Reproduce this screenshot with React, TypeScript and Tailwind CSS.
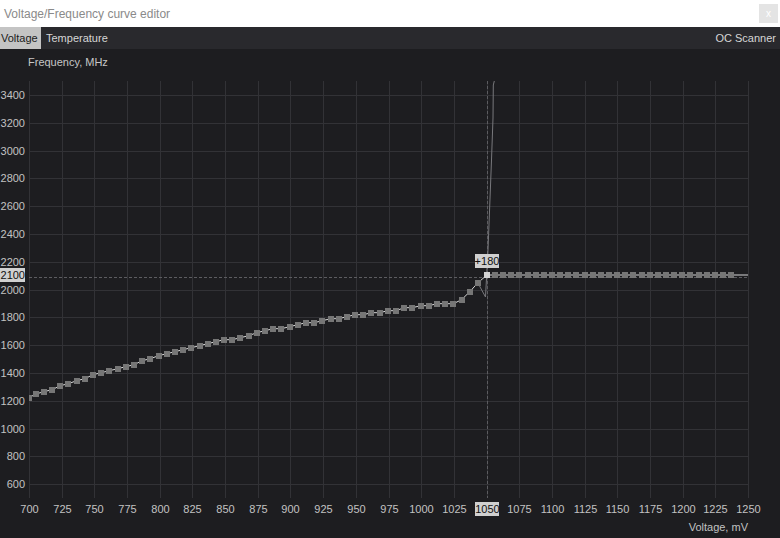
import React from "react";

// Plot geometry, in page pixels (the svg viewBox starts at the top of the chart panel)
const PLOT_LEFT = 29;
const PLOT_RIGHT = 748;
const PLOT_TOP = 81;
const PLOT_BOTTOM = 498;
const MV_MIN = 700;
const MV_MAX = 1250;
const MHZ_MIN = 500;
const MHZ_MAX = 3500;

const xOf = (mv: number) => PLOT_LEFT + ((mv - MV_MIN) / (MV_MAX - MV_MIN)) * (PLOT_RIGHT - PLOT_LEFT);
const yOf = (mhz: number) => PLOT_TOP + ((MHZ_MAX - mhz) / (MHZ_MAX - MHZ_MIN)) * (PLOT_BOTTOM - PLOT_TOP);

const VOLT_TICKS = Array.from({ length: 23 }, (_, i) => 700 + i * 25);
const FREQ_TICKS = Array.from({ length: 15 }, (_, i) => 600 + i * 200);

// curve points below the locked voltage (screen y, one every ~6.25 mV)
const RAMP_Y = [
  394, 391.7, 389.7, 385.7, 383.7, 380.7, 378.7, 374.7, 372.7, 370.7, 368.7, 366.7, 364.7, 360.7,
  358.7, 355.7, 353.7, 351.7, 349.7, 347.7, 345.7, 343.7, 341.7, 339.7, 339.7, 337.7, 335.7, 332.7,
  330.7, 328.7, 328.7, 326.7, 324.7, 322.7, 322.7, 320.7, 318.7, 318.7, 316.7, 314.7, 314.7, 312.7,
  312.7, 310.7, 310.7, 307.7, 307.7, 305.7, 305.7, 303.7, 303.7, 303.7, 299.7, 291.7, 282.7,
];

const LOCK_X = 487;
const LOCK_Y = 275;
const ramp = RAMP_Y.map((y, k) => ({ x: 35.7 + k * 8.19, y }));
const flat = Array.from({ length: 30 }, (_, k) => ({ x: 495 + k * 8.14, y: LOCK_Y }));
const firstPoint = { x: 29, y: 397.7 };

const linePoints = [firstPoint, ...ramp, { x: LOCK_X, y: LOCK_Y }, ...flat, { x: PLOT_RIGHT, y: LOCK_Y }]
  .map((p) => `${p.x},${p.y}`)
  .join(" ");

function CurveChart() {
  return (
    <svg
      width={780}
      height={489}
      viewBox="0 49 780 489"
      className="block font-['Liberation_Sans',Arial,sans-serif] text-[11px]"
    >
      <defs>
        <clipPath id="plot-clip">
          <rect x={PLOT_LEFT} y={PLOT_TOP} width={PLOT_RIGHT - PLOT_LEFT} height={PLOT_BOTTOM - PLOT_TOP} />
        </clipPath>
      </defs>

      <text x={28} y={66} fill="#c6c6c6">
        Frequency, MHz
      </text>

      {/* grid */}
      <g stroke="#323236" strokeWidth={1} shapeRendering="crispEdges">
        {VOLT_TICKS.map((mv) => {
          const x = Math.round(xOf(mv)) + 0.5;
          return <line key={mv} x1={x} x2={x} y1={PLOT_TOP} y2={PLOT_BOTTOM} />;
        })}
        {FREQ_TICKS.map((f) => {
          const y = Math.round(yOf(f)) + 0.5;
          return <line key={f} x1={PLOT_LEFT} x2={PLOT_RIGHT} y1={y} y2={y} />;
        })}
      </g>

      {/* locked point guides */}
      <g stroke="#5c5c60" strokeWidth={1} strokeDasharray="3 2" shapeRendering="crispEdges">
        <line x1={PLOT_LEFT} x2={PLOT_RIGHT} y1={277.5} y2={277.5} />
        <line x1={LOCK_X + 0.5} x2={LOCK_X + 0.5} y1={PLOT_TOP} y2={PLOT_BOTTOM} />
      </g>

      {/* default curve, shooting up past the lock */}
      <polyline
        points="479,285 485.5,297 488,250 491.5,160 493,118 493.3,85 494.3,81"
        fill="none"
        stroke="#78787c"
        strokeWidth={1}
        clipPath="url(#plot-clip)"
      />

      {/* edited curve */}
      <g clipPath="url(#plot-clip)">
        <polyline points={linePoints} fill="none" stroke="#d6d6d6" strokeWidth={1} />
        <g fill="#767676" shapeRendering="crispEdges">
          {[firstPoint, ...ramp, ...flat].map((p, i) => (
            <rect key={i} x={Math.round(p.x) - 3} y={Math.round(p.y) - 3} width={6} height={6} />
          ))}
        </g>
        <rect x={LOCK_X - 3} y={LOCK_Y - 3} width={6} height={6} fill="#d4d4d4" shapeRendering="crispEdges" />
      </g>

      {/* offset tag */}
      <rect x={475} y={254} width={24} height={14} fill="#d0d0d0" />
      <text x={487} y={265} textAnchor="middle" fill="#111">
        +180
      </text>

      {/* frequency axis */}
      <g fill="#c2c2c2">
        {FREQ_TICKS.map((f) => (
          <text key={f} x={25} y={Math.round(yOf(f)) + 4} textAnchor="end">
            {f}
          </text>
        ))}
      </g>
      <rect x={0} y={268} width={25} height={14} fill="#d0d0d0" />
      <text x={25} y={279} textAnchor="end" fill="#111">
        2100
      </text>

      {/* voltage axis */}
      <rect x={475} y={502} width={24} height={14} fill="#d0d0d0" />
      {VOLT_TICKS.map((mv) => (
        <text
          key={mv}
          x={Math.round(xOf(mv)) + 0.5}
          y={513}
          textAnchor="middle"
          fill={mv === 1050 ? "#111" : "#c2c2c2"}
        >
          {mv}
        </text>
      ))}
      <text x={748} y={531} textAnchor="end" fill="#c2c2c2">
        Voltage, mV
      </text>
    </svg>
  );
}

export default function App() {
  return (
    <div className="w-[780px] h-[538px] flex flex-col bg-[#1d1d20] overflow-hidden font-['Liberation_Sans',Arial,sans-serif]">
      {/* window title */}
      <div className="h-[27px] bg-white flex items-center justify-between pl-[4px] pr-[2px]">
        <span className="text-[12px] text-[#8a8a8a]">Voltage/Frequency curve editor</span>
        <button className="w-[19px] h-[19px] bg-[#e4e4e4] text-white text-[10px] leading-none flex items-center justify-center">
          x
        </button>
      </div>

      {/* tabs */}
      <div className="h-[22px] bg-[#29292d] flex items-stretch text-[11px]">
        <div className="bg-[#c4c4c4] text-[#1a1a1a] px-[1px] w-[41px] flex items-center">Voltage</div>
        <div className="text-[#d6d6d6] pl-[5px] flex items-center">Temperature</div>
        <div className="ml-auto text-[#d6d6d6] pr-[4px] flex items-center">OC Scanner</div>
      </div>

      <CurveChart />
    </div>
  );
}
